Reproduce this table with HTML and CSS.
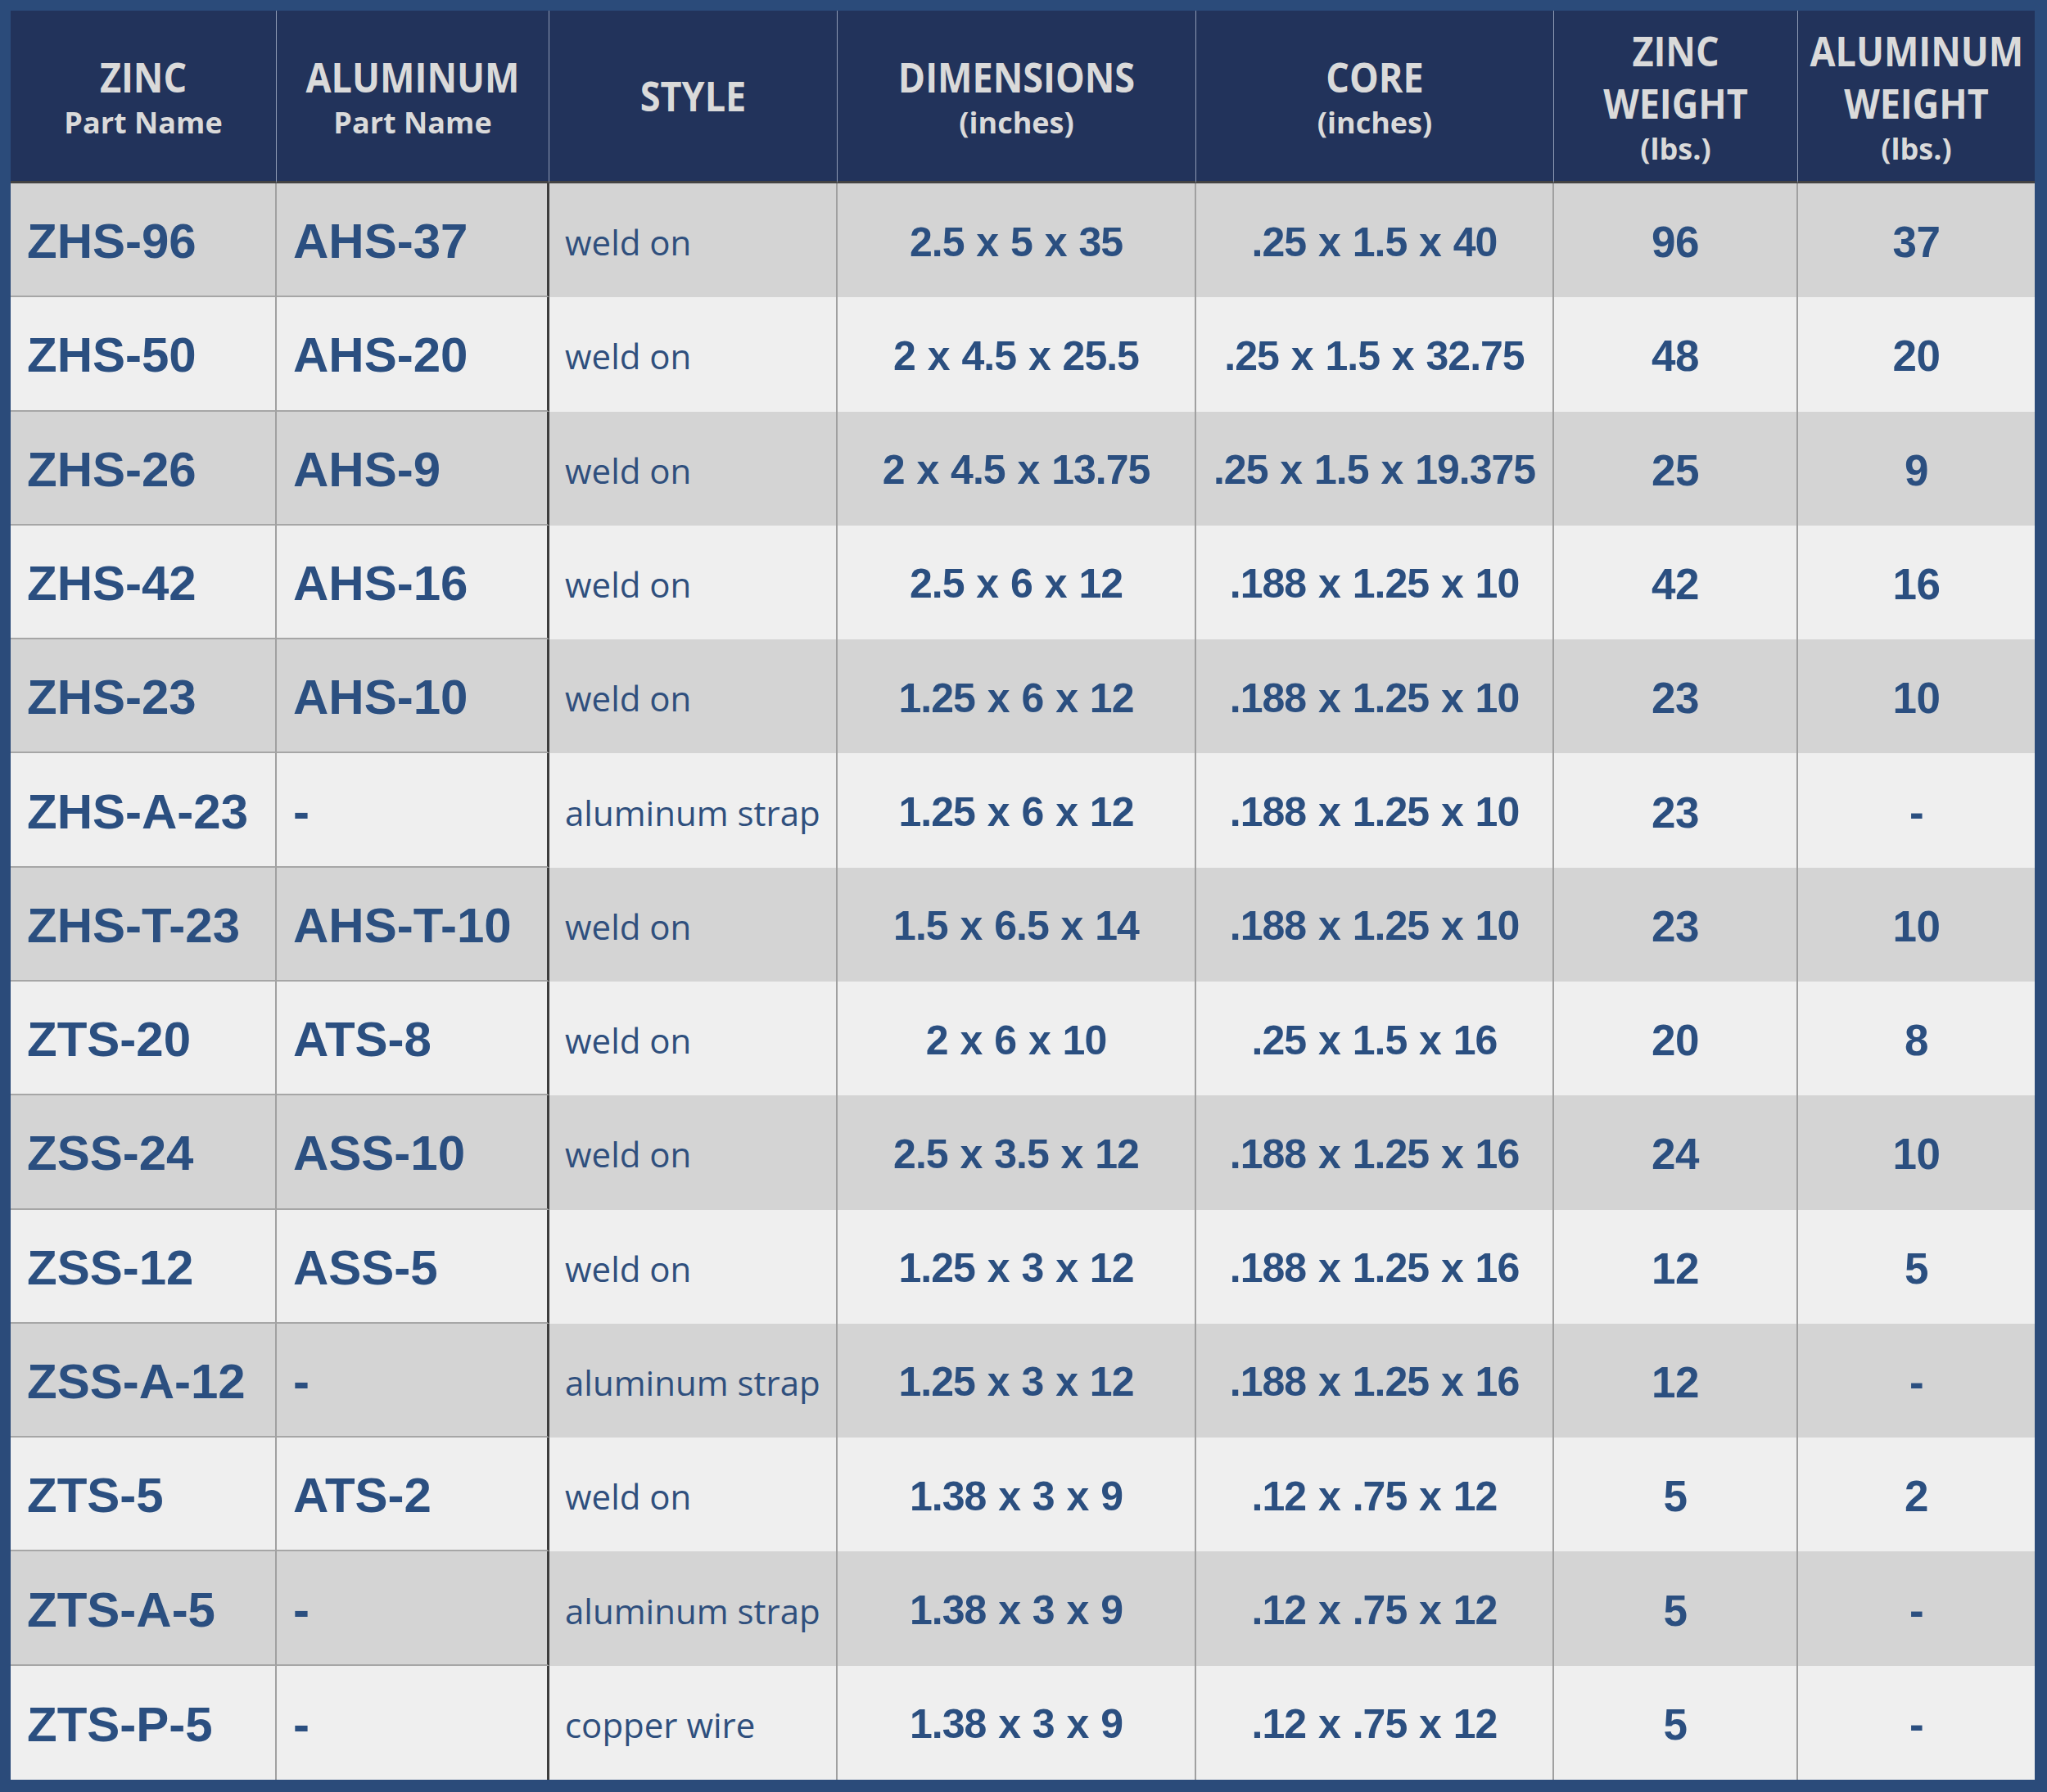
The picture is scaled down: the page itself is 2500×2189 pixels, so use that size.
FILE: index.html
```html
<!DOCTYPE html>
<html lang="en">
<head>
<meta charset="utf-8">
<title>Zinc and Aluminum Anodes</title>
<link rel="stylesheet" href="styles.css">
</head>
<body>
<div class="frame">
  <div class="sheet">
    <div class="row head">
      <div class="th"><div class="main">ZINC</div><div class="sub">Part Name</div></div>
      <div class="th"><div class="main">ALUMINUM</div><div class="sub">Part Name</div></div>
      <div class="th split"><div class="main">STYLE</div></div>
      <div class="th"><div class="main">DIMENSIONS</div><div class="sub">(inches)</div></div>
      <div class="th"><div class="main">CORE</div><div class="sub">(inches)</div></div>
      <div class="th"><div class="main">ZINC</div><div class="main">WEIGHT</div><div class="sub">(lbs.)</div></div>
      <div class="th last"><div class="main">ALUMINUM</div><div class="main">WEIGHT</div><div class="sub">(lbs.)</div></div>
    </div>

    <div class="row odd">
      <div class="td name">ZHS-96</div><div class="td name split">AHS-37</div><div class="td style">weld on</div>
      <div class="td num">2.5 x 5 x 35</div><div class="td num">.25 x 1.5 x 40</div><div class="td num wt">96</div><div class="td num wt last">37</div>
    </div>
    <div class="row even">
      <div class="td name">ZHS-50</div><div class="td name split">AHS-20</div><div class="td style">weld on</div>
      <div class="td num">2 x 4.5 x 25.5</div><div class="td num">.25 x 1.5 x 32.75</div><div class="td num wt">48</div><div class="td num wt last">20</div>
    </div>
    <div class="row odd">
      <div class="td name">ZHS-26</div><div class="td name split">AHS-9</div><div class="td style">weld on</div>
      <div class="td num">2 x 4.5 x 13.75</div><div class="td num">.25 x 1.5 x 19.375</div><div class="td num wt">25</div><div class="td num wt last">9</div>
    </div>
    <div class="row even">
      <div class="td name">ZHS-42</div><div class="td name split">AHS-16</div><div class="td style">weld on</div>
      <div class="td num">2.5 x 6 x 12</div><div class="td num">.188 x 1.25 x 10</div><div class="td num wt">42</div><div class="td num wt last">16</div>
    </div>
    <div class="row odd">
      <div class="td name">ZHS-23</div><div class="td name split">AHS-10</div><div class="td style">weld on</div>
      <div class="td num">1.25 x 6 x 12</div><div class="td num">.188 x 1.25 x 10</div><div class="td num wt">23</div><div class="td num wt last">10</div>
    </div>
    <div class="row even">
      <div class="td name">ZHS-A-23</div><div class="td name split">-</div><div class="td style">aluminum strap</div>
      <div class="td num">1.25 x 6 x 12</div><div class="td num">.188 x 1.25 x 10</div><div class="td num wt">23</div><div class="td num wt last">-</div>
    </div>
    <div class="row odd">
      <div class="td name">ZHS-T-23</div><div class="td name split">AHS-T-10</div><div class="td style">weld on</div>
      <div class="td num">1.5 x 6.5 x 14</div><div class="td num">.188 x 1.25 x 10</div><div class="td num wt">23</div><div class="td num wt last">10</div>
    </div>
    <div class="row even">
      <div class="td name">ZTS-20</div><div class="td name split">ATS-8</div><div class="td style">weld on</div>
      <div class="td num">2 x 6 x 10</div><div class="td num">.25 x 1.5 x 16</div><div class="td num wt">20</div><div class="td num wt last">8</div>
    </div>
    <div class="row odd">
      <div class="td name">ZSS-24</div><div class="td name split">ASS-10</div><div class="td style">weld on</div>
      <div class="td num">2.5 x 3.5 x 12</div><div class="td num">.188 x 1.25 x 16</div><div class="td num wt">24</div><div class="td num wt last">10</div>
    </div>
    <div class="row even">
      <div class="td name">ZSS-12</div><div class="td name split">ASS-5</div><div class="td style">weld on</div>
      <div class="td num">1.25 x 3 x 12</div><div class="td num">.188 x 1.25 x 16</div><div class="td num wt">12</div><div class="td num wt last">5</div>
    </div>
    <div class="row odd">
      <div class="td name">ZSS-A-12</div><div class="td name split">-</div><div class="td style">aluminum strap</div>
      <div class="td num">1.25 x 3 x 12</div><div class="td num">.188 x 1.25 x 16</div><div class="td num wt">12</div><div class="td num wt last">-</div>
    </div>
    <div class="row even">
      <div class="td name">ZTS-5</div><div class="td name split">ATS-2</div><div class="td style">weld on</div>
      <div class="td num">1.38 x 3 x 9</div><div class="td num">.12 x .75 x 12</div><div class="td num wt">5</div><div class="td num wt last">2</div>
    </div>
    <div class="row odd">
      <div class="td name">ZTS-A-5</div><div class="td name split">-</div><div class="td style">aluminum strap</div>
      <div class="td num">1.38 x 3 x 9</div><div class="td num">.12 x .75 x 12</div><div class="td num wt">5</div><div class="td num wt last">-</div>
    </div>
    <div class="row even final">
      <div class="td name">ZTS-P-5</div><div class="td name split">-</div><div class="td style">copper wire</div>
      <div class="td num">1.38 x 3 x 9</div><div class="td num">.12 x .75 x 12</div><div class="td num wt">5</div><div class="td num wt last">-</div>
    </div>
  </div>
</div>
</body>
</html>
```

FILE: styles.css
```css
* { box-sizing: border-box; }

html, body {
  margin: 0;
  padding: 0;
  background: #2b4b7a;
}

.frame {
  width: 2500px;
  height: 2189px;
  padding: 13px 15px 15px 13px;
  background: #2b4b7a;
}

.sheet {
  display: grid;
  grid-template-columns: 325px 333px 352px 438px 437px 298px 289px;
  grid-template-rows: 211px repeat(14, 1fr);
  height: 2161px;
  width: 2472px;
}

.row { display: contents; }

/* header */
.th {
  background: #22335b;
  color: #dadada;
  border-right: 1px solid #8e9ab4;
  border-bottom: 3px solid #434343;
  display: flex;
  flex-direction: column;
  align-items: stretch;
  justify-content: center;
  text-align: center;
  font-family: "Open Sans", "Noto Sans", sans-serif;
  font-weight: 700;
}
.th.last { border-right: none; }

.th .main {
  font-size: 50px;
  line-height: 64px;
  white-space: nowrap;
  transform: scaleX(0.9);
}
.th .sub {
  font-size: 36px;
  line-height: 47px;
}

/* body cells */
.td {
  display: flex;
  align-items: center;
  color: #2b4f80;
  border-right: 2px solid #a0a0a0;
  padding-top: 4px;
}
.td.last { border-right: none; }
.td.split { border-right: 3px solid #3d3d3d; }

.odd .td { background: #d4d4d4; }
.even .td { background: #efefef; }

.td.name {
  font-family: "Liberation Sans", Arial, sans-serif;
  font-weight: 700;
  font-size: 60px;
  padding-left: 20px;
  border-bottom: 2px solid #a6a6a6;
}
.final .td.name { border-bottom: none; }

.td.style {
  font-family: "Open Sans", "Noto Sans", sans-serif;
  font-weight: 400;
  font-size: 42px;
  padding-left: 19px;
  color: #2f4f7d;
}

.td.num {
  justify-content: center;
  font-family: "Liberation Sans", Arial, sans-serif;
  font-weight: 700;
  font-size: 50px;
  letter-spacing: -1px;
  word-spacing: 2px;
}
.td.num.wt {
  font-size: 53px;
  letter-spacing: -0.5px;
}
```
